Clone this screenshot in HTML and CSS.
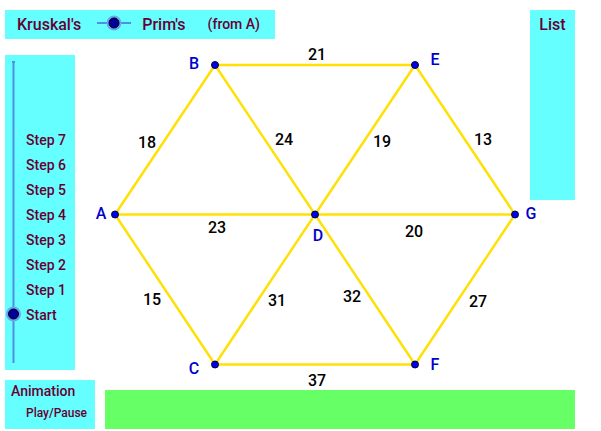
FILE: index.html
```html
<!DOCTYPE html>
<html>
<head>
<meta charset="utf-8">
<link rel="stylesheet" href="styles.css">
</head>
<body>
<div class="applet">
  <svg class="graph" viewBox="0 0 601 431" width="601" height="431">
    <g class="edges">
      <line x1="115" y1="214.5" x2="215" y2="65"/>
      <line x1="215" y1="65" x2="415" y2="65"/>
      <line x1="415" y1="65" x2="515" y2="214.5"/>
      <line x1="515" y1="214.5" x2="415" y2="364.5"/>
      <line x1="415" y1="364.5" x2="215" y2="364.5"/>
      <line x1="215" y1="364.5" x2="115" y2="214.5"/>
      <line x1="315" y1="214.5" x2="115" y2="214.5"/>
      <line x1="315" y1="214.5" x2="215" y2="65"/>
      <line x1="315" y1="214.5" x2="415" y2="65"/>
      <line x1="315" y1="214.5" x2="515" y2="214.5"/>
      <line x1="315" y1="214.5" x2="415" y2="364.5"/>
      <line x1="315" y1="214.5" x2="215" y2="364.5"/>
    </g>
    <g class="weights">
      <text x="317" y="54">21</text>
      <text x="147" y="142">18</text>
      <text x="284" y="139">24</text>
      <text x="382" y="141">19</text>
      <text x="483" y="139">13</text>
      <text x="217" y="227">23</text>
      <text x="414" y="231">20</text>
      <text x="152" y="299">15</text>
      <text x="277" y="300">31</text>
      <text x="352" y="296">32</text>
      <text x="478" y="301">27</text>
      <text x="317" y="380">37</text>
    </g>
    <g class="nodes">
      <circle cx="115" cy="214.5" r="3.5"/>
      <circle cx="215" cy="65" r="3.5"/>
      <circle cx="415" cy="65" r="3.5"/>
      <circle cx="515" cy="214.5" r="3.5"/>
      <circle cx="415" cy="364.5" r="3.5"/>
      <circle cx="215" cy="364.5" r="3.5"/>
      <circle cx="315" cy="214.5" r="3.5"/>
    </g>
    <g class="names">
      <text x="101" y="213">A</text>
      <text x="194" y="63">B</text>
      <text x="194" y="368">C</text>
      <text x="318" y="235">D</text>
      <text x="435" y="59">E</text>
      <text x="435" y="364">F</text>
      <text x="531" y="213">G</text>
    </g>
  </svg>

  <div class="panel top">
    <span class="lbl big">Kruskal's</span>
    <svg class="hslider" width="34" height="16" viewBox="0 0 34 16">
      <line x1="0" y1="8" x2="34" y2="8" class="track"/>
      <circle cx="17" cy="8" r="7.5" class="halo"/>
      <circle cx="17" cy="8" r="5" class="knob"/>
    </svg>
    <span class="lbl big prim">Prim's</span>
    <span class="lbl mid from">(from A)</span>
  </div>

  <div class="panel list"><span class="lbl big">List</span></div>

  <div class="panel steps">
    <svg class="vslider" width="20" height="315" viewBox="0 0 20 315">
      <line x1="8.5" y1="7" x2="8.5" y2="308" class="track"/>
      <line x1="7" y1="7" x2="10" y2="7" class="track"/>
      <circle cx="8.5" cy="259" r="7.5" class="halo"/>
      <circle cx="8.5" cy="259" r="5" class="knob"/>
    </svg>
    <ul class="steplist">
      <li>Step 7</li>
      <li>Step 6</li>
      <li>Step 5</li>
      <li>Step 4</li>
      <li>Step 3</li>
      <li>Step 2</li>
      <li>Step 1</li>
      <li>Start</li>
    </ul>
  </div>

  <div class="panel anim">
    <span class="lbl mid">Animation</span>
    <span class="lbl small play">Play/Pause</span>
  </div>

  <div class="greenbar"></div>
</div>
</body>
</html>
```

FILE: styles.css
```css
html, body {
  margin: 0;
  padding: 0;
  background: #ffffff;
}
body {
  font-family: Roboto, "Liberation Sans", sans-serif;
}
.applet {
  width: 601px;
  height: 431px;
  display: grid;
  grid-template-columns: 5px 70px 20px 10px 170px 255px 45px 26px;
  grid-template-rows: 10px 29px 16px 145px 170px 10px 10px 39px 2px;
  overflow: hidden;
}
.graph {
  grid-column: 1 / -1;
  grid-row: 1 / -1;
  z-index: 0;
  display: block;
}
.edges line {
  stroke: #ffe000;
  stroke-width: 2.4;
}
.nodes circle {
  fill: #0000ee;
  stroke: #000033;
  stroke-width: 1;
}
.weights text {
  font-family: Roboto, "Liberation Sans", sans-serif;
  font-size: 16px;
  font-weight: 500;
  fill: #000000;
  text-anchor: middle;
  dominant-baseline: central;
}
.names text {
  font-family: Roboto, "Liberation Sans", sans-serif;
  font-size: 16px;
  font-weight: 500;
  fill: #0000cc;
  text-anchor: middle;
  dominant-baseline: central;
}
.panel {
  background: #66ffff;
  z-index: 1;
}
.lbl {
  color: #660033;
  font-weight: 500;
  white-space: nowrap;
}
.big { font-size: 16px; }
.mid { font-size: 14px; }
.small { font-size: 12px; }

.top {
  grid-column: 2 / 6;
  grid-row: 2 / 3;
  display: flex;
  align-items: center;
  padding-left: 12px;
}
.hslider {
  margin-left: 16px;
  margin-top: -3px;
  display: block;
}
.prim { margin-left: 11px; }
.from { margin-left: 22px; margin-top: -2px; }

.track {
  stroke: #4d8fe0;
  stroke-width: 2;
}
.halo {
  fill: #6aa6ea;
}
.knob {
  fill: #000099;
  stroke: #000022;
  stroke-width: 1;
}

.list {
  grid-column: 7 / 8;
  grid-row: 2 / 5;
  display: flex;
  justify-content: center;
  padding-top: 5px;
  line-height: 20px;
}

.steps {
  grid-column: 2 / 3;
  grid-row: 4 / 6;
  display: flex;
  align-items: flex-start;
}
.vslider { display: block; flex: none; }
.steplist {
  list-style: none;
  margin: 0;
  padding: 73px 0 0 1px;
}
.steplist li {
  font-size: 14px;
  font-weight: 500;
  color: #660033;
  line-height: 25px;
  height: 25px;
  white-space: nowrap;
}

.anim {
  grid-column: 2 / 4;
  grid-row: 7 / 9;
  display: flex;
  flex-direction: column;
  padding-left: 6px;
  padding-top: 2px;
}
.anim .mid { line-height: 18px; }
.play { margin-left: 15px; margin-top: 5px; line-height: 16px; }

.greenbar {
  grid-column: 5 / 8;
  grid-row: 8 / 9;
  background: #66ff66;
  z-index: 1;
}
```
